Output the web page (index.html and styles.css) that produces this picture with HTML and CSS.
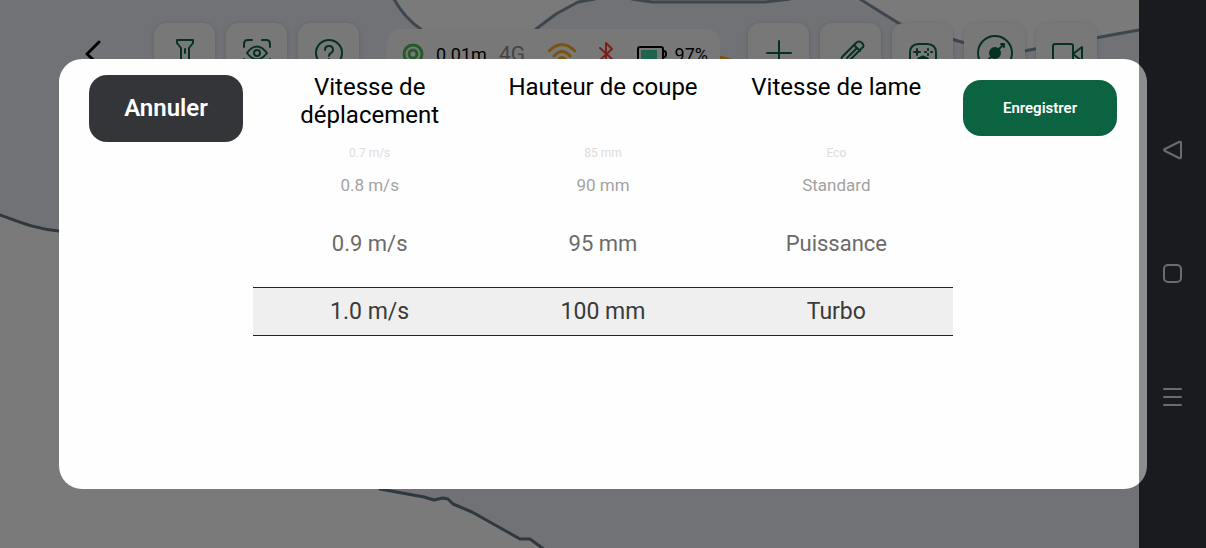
FILE: index.html
```html
<!DOCTYPE html>
<html lang="fr">
<head>
  <meta charset="utf-8">
  <title>Paramètres de coupe</title>
  <link rel="stylesheet" href="styles.css">
</head>
<body>
  <div class="screen">
    <main class="app">
      <svg class="map" viewBox="0 0 1139 548" preserveAspectRatio="xMinYMin slice" aria-hidden="true">
        <path class="zone" d="M0 215C22 223 36 229 59 231L220 270L380 489L424 497L434 500L443 498L448 499L453 504L472 512L520 539L530 539L545 548H0Z"/>
        <path class="zone" d="M394 0C401 12 410 22 422 30L536 30L556 14L578 2L595 0Z"/>
        <path class="zone" d="M855 0L900 24L965 44L1024 51L1139 30V0Z"/>
        <path class="edge" d="M0 215C22 223 36 229 59 231M380 489L424 497L434 500L443 498L448 499L453 504L472 512L520 539L530 539L545 550"/>
        <path class="edge light" d="M394 -1C401 12 410 22 422 30M536 29L556 14L578 2L595 -1M632 -1L652 2L765 2L790 -1M858 -2L900 24L965 43M1024 51L1139 30"/>
        <path class="heading-mark" d="M700 50L736 60H700Z"/>
      </svg>
      <header class="topbar">
        <button class="back" aria-label="Retour">
          <svg width="18" height="26" viewBox="0 0 18 26"><path d="M15 2L3 14L15 25"/></svg>
        </button>
        <div class="tools">
          <button class="tool" aria-label="Lampe">
            <svg width="36" height="36" viewBox="0 0 36 36"><path d="M10 5H26V8L22 13V31H14V13L10 8ZM18 14V18"/></svg>
          </button>
          <button class="tool" aria-label="Vision">
            <svg width="36" height="36" viewBox="0 0 36 36"><path d="M5 12V9Q5 5 9 5H13M23 5H27Q31 5 31 9V12M5 24V27Q5 31 9 31H12M24 31H27Q31 31 31 27V24M8 18Q18 5 28 18Q18 31 8 18Z"/><circle cx="18" cy="18" r="3"/></svg>
          </button>
          <button class="tool" aria-label="Aide">
            <svg width="36" height="36" viewBox="0 0 36 36"><circle cx="18" cy="18" r="13"/><path d="M14 15Q14 11 18 11T22 15Q22 17 20 18T18 21M18 24V26"/></svg>
          </button>
        </div>
        <div class="status">
          <div class="status-group">
            <svg class="gps" width="22" height="22" viewBox="0 0 22 22"><circle cx="11" cy="11" r="9"/><circle cx="11" cy="11" r="4"/></svg>
            <span>0.01m</span>
            <span class="network">4G</span>
          </div>
          <svg class="wifi" width="28" height="24" viewBox="0 0 28 24"><path d="M1 9Q14 -4 27 9M6 14Q14 5 22 14M10 18Q14 13 18 18"/><circle cx="14" cy="21" r="1"/></svg>
          <svg class="bluetooth" width="16" height="26" viewBox="0 0 16 26"><path d="M2 7L14 18L8 24V2L14 8L2 19"/></svg>
          <div class="status-group battery">
            <svg width="30" height="18" viewBox="0 0 30 18"><rect class="case" x="1" y="2" width="25" height="15" rx="2"/><path class="case" d="M27 6Q29 6 29 9T27 12"/><rect class="charge" x="4" y="5" width="16" height="9"/></svg>
            <span>97%</span>
          </div>
        </div>
        <div class="tools">
          <button class="tool" aria-label="Ajouter">
            <svg width="36" height="36" viewBox="0 0 36 36"><path d="M18 6V30M6 18H30"/></svg>
          </button>
          <button class="tool" aria-label="Modifier">
            <svg width="36" height="36" viewBox="0 0 36 36"><path d="M7 29L9 22L23 8Q26 5 29 8T29 13L15 27L7 29M21 10L27 16M14 23L23 14"/></svg>
          </button>
          <button class="tool" aria-label="Manette">
            <svg width="36" height="36" viewBox="0 0 36 36"><path d="M5 27V18Q5 9 14 9H22Q31 9 31 18V27Q31 31 27 29L22 23H14L9 29Q5 31 5 27ZM12 14V20M9 17H15M15 23Q18 20 21 23"/><path class="dots" d="M23 14V15M23 19V20M20 17H21M26 17H27"/></svg>
          </button>
          <button class="tool" aria-label="Point">
            <svg width="36" height="36" viewBox="0 0 36 36"><circle cx="18" cy="18" r="17"/><circle class="solid" cx="18" cy="18" r="5"/><path d="M12 24L27 9M24 9H27V12"/></svg>
          </button>
          <button class="tool" aria-label="Caméra">
            <svg width="36" height="36" viewBox="0 0 36 36"><rect x="4" y="9" width="20" height="19" rx="2"/><path d="M33 12V26L24 19Z"/></svg>
          </button>
        </div>
      </header>
    </main>

    <nav class="navbar">
      <button class="nav-key" aria-label="Précédent">
        <svg width="20" height="20" viewBox="0 0 20 20"><path d="M16 2Q18 1 18 3V17Q18 19 16 18L2 11Q0 10 2 9Z"/></svg>
      </button>
      <button class="nav-key" aria-label="Accueil">
        <svg width="20" height="20" viewBox="0 0 20 20"><rect x="1" y="1" width="17" height="17" rx="4"/></svg>
      </button>
      <button class="nav-key" aria-label="Applications">
        <svg width="20" height="20" viewBox="0 0 20 20"><path d="M1 1H18M1 9H18M1 17H18"/></svg>
      </button>
    </nav>

    <div class="backdrop">
      <div class="dialog" role="dialog" aria-label="Paramètres de coupe">
        <button class="btn cancel">Annuler</button>
        <div class="titles">
          <h2 id="speed">Vitesse de déplacement</h2>
          <h2 id="height">Hauteur de coupe</h2>
          <h2 id="blade">Vitesse de lame</h2>
        </div>
        <button class="btn save">Enregistrer</button>
        <div class="wheels">
          <ul class="wheel" role="listbox" aria-labelledby="speed">
            <li class="far" role="option">0.7 m/s</li>
            <li class="mid" role="option">0.8 m/s</li>
            <li class="near" role="option">0.9 m/s</li>
            <li class="selected" role="option" aria-selected="true">1.0 m/s</li>
          </ul>
          <ul class="wheel" role="listbox" aria-labelledby="height">
            <li class="far" role="option">85 mm</li>
            <li class="mid" role="option">90 mm</li>
            <li class="near" role="option">95 mm</li>
            <li class="selected" role="option" aria-selected="true">100 mm</li>
          </ul>
          <ul class="wheel" role="listbox" aria-labelledby="blade">
            <li class="far" role="option">Eco</li>
            <li class="mid" role="option">Standard</li>
            <li class="near" role="option">Puissance</li>
            <li class="selected" role="option" aria-selected="true">Turbo</li>
          </ul>
        </div>
      </div>
    </div>
  </div>
</body>
</html>
```

FILE: styles.css
```css
:root {
  --map: #e1e4ea;
  --zone: #f4f5f6;
  --card: #f0f0f0;
  --green: #0c6342;
  --nav: #34363f;
}

* {
  box-sizing: border-box;
}

body {
  margin: 0;
  font-family: Roboto, sans-serif;
  color: #000;
}

button {
  border: none;
  padding: 0;
  background: none;
  font-family: inherit;
  cursor: pointer;
}

svg {
  display: block;
  flex-shrink: 0;
  fill: none;
  stroke: currentColor;
  stroke-width: 2;
  stroke-linecap: round;
  stroke-linejoin: round;
}

.screen {
  position: relative;
  display: flex;
  min-height: 100vh;
  overflow: hidden;
}

.app {
  position: relative;
  flex: 1;
  background: var(--map);
}

/* map */
.map {
  position: absolute;
  inset: 0;
  width: 100%;
  height: 100%;
}

.zone {
  fill: var(--zone);
  stroke: none;
}

.edge {
  stroke: #5e7078;
  stroke-width: 3;
}

.edge.light {
  stroke: #7a8c9c;
}

.heading-mark {
  fill: #f5a623;
  stroke: none;
}

/* top bar */
.topbar {
  position: relative;
  display: flex;
  padding: 23px 42px 0 84px;
}

.back {
  align-self: flex-start;
  margin: 17px 52px 0 0;
}

.back svg {
  stroke-width: 3;
}

.tools {
  display: flex;
  gap: 11px;
}

.tool {
  display: flex;
  align-items: center;
  justify-content: center;
  width: 61px;
  height: 60px;
  border-radius: 12px;
  background: var(--card);
  color: var(--green);
  box-shadow: 0 1px 4px rgba(80, 90, 120, 0.25);
}

.solid {
  fill: currentColor;
}

.status {
  display: flex;
  flex: 1;
  align-items: center;
  justify-content: space-between;
  height: 50px;
  margin: 6px 28px 0;
  padding: 0 12px 0 15px;
  border-radius: 14px;
  background: var(--card);
  font-size: 18px;
}

.status-group {
  display: flex;
  align-items: center;
  gap: 12px;
}

.status-group.battery {
  gap: 8px;
}

.gps {
  color: #4cb556;
  stroke-width: 3;
}

.network {
  color: #888;
  font-size: 21px;
}

.wifi {
  color: #f5a623;
  stroke-width: 3;
}

.bluetooth {
  color: #f04438;
}

.case {
  stroke: #000;
}

.charge {
  fill: #3dcb96;
  stroke: none;
}

/* system keys */
.navbar {
  display: flex;
  flex-direction: column;
  align-items: center;
  justify-content: center;
  gap: 104px;
  width: 67px;
  background: var(--nav);
}

.nav-key {
  color: #d8d8dc;
}

/* dialog */
.backdrop {
  position: absolute;
  inset: 0;
  display: flex;
  align-items: center;
  padding: 0 59px;
  background: rgba(0, 0, 0, 0.5);
}

.dialog {
  display: grid;
  flex: 1;
  grid-template-columns: 154px 1fr 154px;
  grid-template-rows: 70px auto;
  gap: 6px 10px;
  align-items: center;
  padding: 14px 30px 15px;
  border-radius: 23px;
  /* the last strip lies over the system keys */
  background: linear-gradient(to left, #8c8d91 8px, #fefefe 8px);
}

.btn {
  border-radius: 18px;
  color: #fff;
}

.cancel {
  height: 67px;
  background: #343539;
  font-size: 24px;
  font-weight: 600;
}

.save {
  height: 56px;
  background: var(--green);
  font-size: 15px;
  font-weight: 600;
}

.titles,
.wheels {
  display: grid;
  grid-template-columns: repeat(3, 1fr);
}

.titles {
  align-self: start;
}

.titles h2 {
  margin: 0;
  padding: 0 12px;
  font-size: 24px;
  font-weight: 400;
  line-height: 28px;
  text-align: center;
}

.wheels {
  grid-column: 2;
  min-height: 325px;
}

.wheel {
  margin: 0;
  padding: 0;
  list-style: none;
  text-align: center;
}

.far {
  font-size: 12px;
  line-height: 8px;
  color: #dcdcdc;
}

.mid {
  font-size: 17px;
  line-height: 56px;
  color: #a2a2a2;
}

.near {
  margin-bottom: 12px;
  font-size: 22px;
  line-height: 62px;
  color: #6b6b6b;
}

.selected {
  border-top: 1px solid #222;
  border-bottom: 1px solid #222;
  background: #efefef;
  color: #3a3a3a;
  font-size: 23px;
  line-height: 47px;
}
```
